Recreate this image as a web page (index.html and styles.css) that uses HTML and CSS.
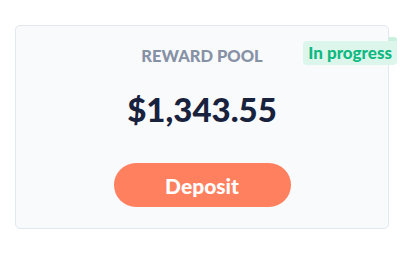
FILE: index.html
```html
<!DOCTYPE html>
<html>
<head>
<meta charset="utf-8">
<link rel="stylesheet" href="styles.css">
</head>
<body>
<div class="page">
  <div class="card">
    <span class="badge">In progress</span>
    <div class="title">REWARD POOL</div>
    <div class="amount">$1,343.55</div>
    <button class="deposit">Deposit</button>
  </div>
</div>
</body>
</html>
```
FILE: styles.css
```css
html, body {
  margin: 0;
  padding: 0;
  background: #ffffff;
  font-family: Lato, "Liberation Sans", sans-serif;
}
.page {
  padding: 25px 0 0 15px;
}
.card {
  position: relative;
  box-sizing: border-box;
  width: 374px;
  height: 204px;
  background: #f8fafc;
  border: 1px solid #e2e8f0;
  border-radius: 5px;
  display: flex;
  flex-direction: column;
  align-items: center;
  padding-top: 20px;
}
.title {
  font-size: 16.5px;
  font-weight: 900;
  color: #8791a5;
  line-height: 20px;
}
.amount {
  margin-top: 23px;
  font-size: 33px;
  font-weight: 900;
  color: #19223d;
  line-height: 40px;
}
.deposit {
  margin-top: 34px;
  width: 177px;
  height: 44px;
  border: none;
  border-radius: 22px;
  background: #ff805f;
  color: #ffffff;
  font-family: Lato, "Liberation Sans", sans-serif;
  font-size: 21px;
  font-weight: 900;
  padding: 0;
}
.badge {
  position: absolute;
  top: 15px;
  right: -9px;
  height: 24px;
  line-height: 24px;
  padding: 0 5px;
  background: #ddf6ec;
  color: #10b981;
  font-size: 17px;
  font-weight: 900;
  border-radius: 4px 0 4px 4px;
}
.badge::before {
  content: "";
  position: absolute;
  right: 0;
  top: -4px;
  width: 8px;
  height: 4px;
  background: #c9efdd;
  border-radius: 0 3px 0 0;
}
```
